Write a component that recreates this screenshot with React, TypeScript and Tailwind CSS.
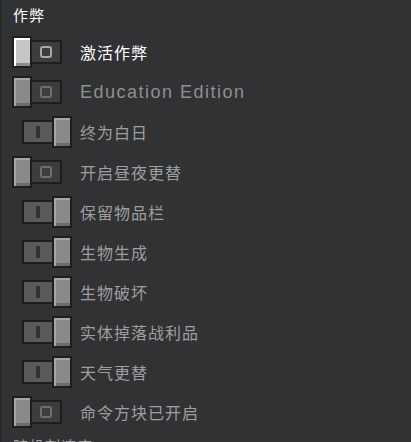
import React from 'react';

type Row = {
  label: string;
  on: boolean;
  active?: boolean;
  latin?: boolean;
};

const rows: Row[] = [
  { label: '激活作弊', on: false, active: true },
  { label: 'Education Edition', on: false, latin: true },
  { label: '终为白日', on: true },
  { label: '开启昼夜更替', on: false },
  { label: '保留物品栏', on: true },
  { label: '生物生成', on: true },
  { label: '生物破坏', on: true },
  { label: '实体掉落战利品', on: true },
  { label: '天气更替', on: true },
  { label: '命令方块已开启', on: false },
];

const cjk = { fontFamily: '"Noto Sans CJK SC", "Noto Sans", sans-serif' };
const latin = { fontFamily: '"Liberation Sans", "Noto Sans CJK SC", sans-serif' };

function Thumb({ active }: { active?: boolean }) {
  const fill = active
    ? 'bg-[#c6c6c6] shadow-[inset_2px_2px_0_#ffffff,inset_0_-3px_0_#8b8b8b]'
    : 'bg-[#8a8a8a] shadow-[inset_2px_2px_0_#a6a6a6,inset_0_-3px_0_#6c6c6c]';
  return (
    <div className="w-5 h-8 shrink-0 border-2 border-[#1e1e1e] bg-[#1e1e1e]">
      <div className={`w-full h-full ${fill}`} />
    </div>
  );
}

function Toggle({ on, active }: { on: boolean; active?: boolean }) {
  if (on) {
    return (
      <div className="w-[60px] flex items-center justify-end">
        <div className="w-8 h-6 -mr-[2px] border-2 border-[#1e1e1e] bg-[#5a5a5a] flex items-center justify-center">
          <div className="w-1 h-3 bg-[#333436]" />
        </div>
        <Thumb active={active} />
      </div>
    );
  }
  return (
    <div className="w-[60px] flex items-center">
      <Thumb active={active} />
      <div className="w-8 h-6 -ml-[2px] border-2 border-[#1e1e1e] bg-[#3c3d3e] flex items-center justify-center">
        <div
          className={`w-3 h-3 border-2 rounded-[3px] ${
            active ? 'border-[#a8a8a8]' : 'border-[#6e6e6e]'
          }`}
        />
      </div>
    </div>
  );
}

export default function App() {
  return (
    <div className="w-[411px] h-[442px] overflow-hidden bg-[#313233] border-l-2 border-[#28292a]">
      <div className="h-8 pl-[11px] pt-[3px] text-[15px] leading-6 tracking-[1px] text-white" style={cjk}>
        作弊
      </div>

      {rows.map(row => (
        <div key={row.label} className="h-10 flex items-center pl-[10px] gap-2">
          <Toggle on={row.on} active={row.active} />
          <span
            className={
              row.latin
                ? 'text-[18px] tracking-[1.5px] text-[#8f8f8f]'
                : `text-[16px] tracking-[1px] ${row.active ? 'text-white' : 'text-[#9f9f9f]'}`
            }
            style={row.latin ? latin : cjk}
          >
            {row.label}
          </span>
        </div>
      ))}

      <div className="pl-[11px] pt-[2px] text-[15px] leading-6 tracking-[1px] text-[#9f9f9f]" style={cjk}>
        随机刻速度
      </div>
    </div>
  );
}
